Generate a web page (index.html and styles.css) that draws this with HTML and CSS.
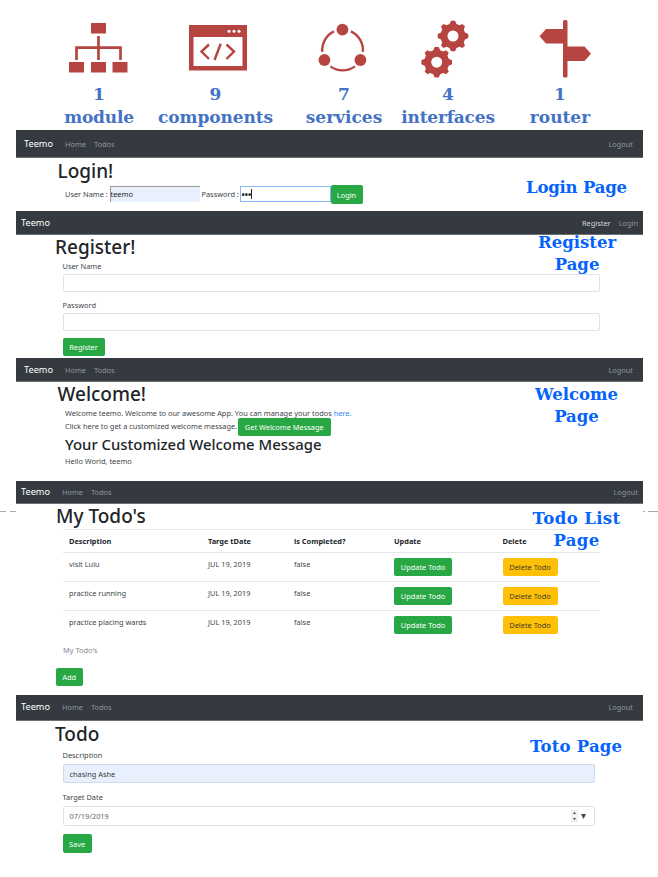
FILE: index.html
```html
<!DOCTYPE html>
<html lang="en">
<head>
<meta charset="utf-8">
<title>Teemo</title>
<link rel="stylesheet" href="styles.css">
</head>
<body>
<header class="summary">
  <div class="stat module">
    <svg width="60" height="66" viewBox="0 0 60 66" fill="#b64541"><path d="M22 12h15v10.500H22zM0 51h15v10.500H0zM22 51h15v10.500H22zM43.500 51h15v10.500h-15z"/><path d="M29.500 25v24M7.500 49V36.700h44V49" fill="none" stroke="#b64541" stroke-width="2.700"/></svg>
    <b>1</b><b class="name">module</b>
  </div>
  <div class="stat components">
    <svg width="60" height="66" viewBox="0 0 60 66"><path fill="#b64541" fill-rule="evenodd" d="M1 14h58v45.500H1zM5.500 26v29h49V26z"/><g fill="#fff"><circle cx="41" cy="20.200" r="1.500"/><circle cx="46" cy="20.200" r="1.500"/><circle cx="51" cy="20.200" r="1.500"/></g><path d="M21 33.500l-7.500 7L21 48M38.500 33.500l7.500 7-7.500 7.500M32.700 32.700L26.500 49" fill="none" stroke="#b64541" stroke-width="2.400"/></svg>
    <b>9</b><b class="name">components</b>
  </div>
  <div class="stat services">
    <svg width="60" height="66" viewBox="0 0 60 66" fill="#b64541"><circle cx="28.400" cy="18.600" r="5.900"/><circle cx="10.400" cy="49" r="5.900"/><circle cx="46.400" cy="49" r="5.900"/><path d="M19.900 20.400A20.800 20.800 0 0 0 8.300 40.800M36.900 20.400A20.800 20.800 0 0 1 48.900 40.800M16.400 55.400A20.800 20.800 0 0 0 40.900 55.400" fill="none" stroke="#b64541" stroke-width="2.400"/></svg>
    <b>7</b><b class="name">services</b>
  </div>
  <div class="stat interfaces">
    <svg width="60" height="66" viewBox="0 0 60 66" fill="#b64541"><defs><path id="gear" fill-rule="evenodd" d="M-2-15.300h4L3.500-12 6.500-10.800 9.400-12 12-9.400 10.800-6.500 12-3.500 15.300-2v4L12 3.500 10.800 6.500 12 9.400 9.400 12 6.500 10.800 3.500 12 2 15.300h-4L-3.500 12-6.500 10.800-9.400 12-12 9.400-10.800 6.500-12 3.500-15.300 2v-4L-12-3.500-10.800-6.500-12-9.400-9.400-12-6.500-10.800-3.500-12zM0-5.500a5.500 5.500 0 1 0 0 11 5.500 5.500 0 0 0 0-11z"/></defs><use href="#gear" x="32" y="25"/><use href="#gear" x="15.700" y="51.200"/></svg>
    <b>4</b><b class="name">interfaces</b>
  </div>
  <div class="stat router">
    <svg width="60" height="66" viewBox="0 0 60 66" fill="#b64541"><rect x="28" y="9" width="4.500" height="57.500" rx="1.500"/><path d="M30 18H11l-6.500 7.200L11 32.500h19zM30 35.500h19.500L56 42.700 49.500 50H30z"/></svg>
    <b>1</b><b class="name">router</b>
  </div>
</header>

<section class="page login">
  <nav><span class="brand">Teemo</span><span>Home</span><span>Todos</span><span class="end">Logout</span></nav>
  <h1>Login!</h1>
  <div class="login-row"><span class="l1">User Name :</span><span class="box filled">teemo</span><span class="l2">Password :</span><span class="box focus"><b>•••</b><i class="caret"></i></span><span class="btn">Login</span></div>
  <div class="tag">Login Page</div>
</section>

<section class="page register">
  <nav><span class="brand">Teemo</span><span class="end on">Register</span><span>Login</span></nav>
  <h1>Register!</h1>
  <div class="form">
    <label>User Name</label><div class="field"></div>
    <label>Password</label><div class="field"></div>
    <span class="btn">Register</span>
  </div>
  <div class="tag">Register<br>Page</div>
</section>

<section class="page welcome">
  <nav><span class="brand">Teemo</span><span>Home</span><span>Todos</span><span class="end">Logout</span></nav>
  <h1>Welcome!</h1>
  <div class="copy">
    <p class="intro">Welcome teemo. Welcome to our awesome App. You can manage your todos <a>here.</a></p>
    <p class="action"><span class="click">Click here to get a customized welcome message.</span><span class="btn">Get Welcome Message</span></p>
    <h2>Your Customized Welcome Message</h2>
    <p class="hello">Hello World, teemo</p>
  </div>
  <div class="tag">Welcome<br>Page</div>
</section>

<section class="page todos">
  <i class="dash left"></i><i class="dash right"></i>
  <nav><span class="brand">Teemo</span><span>Home</span><span>Todos</span><span class="end">Logout</span></nav>
  <h1>My Todo's</h1>
  <div class="table">
    <div class="row head"><span>Description</span><span>Targe tDate</span><span>is Completed?</span><span>Update</span><span>Delete</span></div>
    <div class="row"><span>visit Lulu</span><span>JUL 19, 2019</span><span>false</span><span class="btn">Update Todo</span><span class="btn warn">Delete Todo</span></div>
    <div class="row"><span>practice running</span><span>JUL 19, 2019</span><span>false</span><span class="btn">Update Todo</span><span class="btn warn">Delete Todo</span></div>
    <div class="row"><span>practice placing wards</span><span>JUL 19, 2019</span><span>false</span><span class="btn">Update Todo</span><span class="btn warn">Delete Todo</span></div>
  </div>
  <p class="caption">My Todo's</p>
  <span class="btn add">Add</span>
  <div class="tag">Todo List<br>Page</div>
</section>

<section class="page todo">
  <nav><span class="brand">Teemo</span><span>Home</span><span>Todos</span><span class="end">Logout</span></nav>
  <h1>Todo</h1>
  <div class="form">
    <label>Description</label><div class="field filled">chasing Ashe</div>
    <label>Target Date</label><div class="field date"><span>07/19/2019</span><svg width="16" height="12" viewBox="0 0 16 12"><path d="M0 0h7v12H0z" fill="#efefef"/><path d="M2 4l1.500-2L5 4zM2 8l1.500 2L5 8zM10 4h5l-2.500 5z" fill="#444"/></svg></div>
    <span class="btn">Save</span>
  </div>
  <div class="tag">Toto Page</div>
</section>
</body>
</html>
```
FILE: styles.css
```css
* { box-sizing: border-box; }
body { margin: 0; width: 658px; height: 877px; overflow: hidden; background: #fff; color: #40454a; font: 7.4px/12px "Noto Sans", "Open Sans", sans-serif; white-space: nowrap; }
h1, h2, p { margin: 0; }
i { font-style: normal; }
a { color: #2b8cf5; }

.summary { height: 130px; padding: 11px 0 0 39px; display: flex; }
.stat { width: 120px; display: flex; flex-direction: column; align-items: center; color: #4472c4; font: bold 17px/23px "DejaVu Serif", serif; }
.stat svg { display: block; margin-bottom: 6px; overflow: visible; }
.components { width: 113px; }
.components svg { margin-left: 5px; }
.services { width: 144px; }
.interfaces { width: 64px; }
.interfaces svg { margin-left: 5px; }
.router { width: 160px; }
.router svg { margin-left: 10px; }
.module .name { letter-spacing: -0.2px; }
.components .name { letter-spacing: -0.1px; }
.interfaces .name { letter-spacing: -0.2px; }

.page { position: relative; margin-left: 16px; width: 627px; }
nav { display: flex; align-items: center; height: 24px; background: #343a40; border-bottom: 1px solid #6b7075; padding: 0 10px 0 8px; gap: 8px; color: #92969a; }
.brand { color: #fff; font-size: 9.2px; margin-right: 4px; }
.end { margin-left: auto; }
.on { color: #d0d2d4; }
h1 { font-size: 19px; line-height: 24px; font-weight: 500; color: #212529; margin-left: 40px; }
h2 { font-size: 14.900px; line-height: 17px; font-weight: 500; color: #212529; }
.btn { display: inline-flex; align-items: center; justify-content: center; height: 17.500px; background: #28a745; color: #fff; border-radius: 2px; }
.warn { background: #ffc107; color: #40392a; }
.tag { position: absolute; text-align: center; color: #0563fa; font: bold 16.500px/22px "DejaVu Serif", serif; }
.form { padding-left: 46.500px; }
.form label { display: block; }
.field { border: 1px solid #dfe2e6; border-radius: 2px; width: 537.500px; height: 18px; }

.login { height: 81px; }
.login nav { height: 28px; }
.login h1 { margin-left: 41.500px; line-height: 27px; }
.login-row { display: flex; margin-left: 49px; }
.login-row > span { line-height: 18px; }
.l1 { width: 44.500px; }
.l2 { width: 38px; }
.box { width: 91px; height: 16px; margin-top: 1px; padding-left: 1px; color: #222; }
.login-row .box { line-height: 15px; }
.login-row .filled { background: #e8f0fe; border-top: 1px solid #999; border-left: 1px solid #999; padding-left: 0; margin-right: 2px; width: 90px; }
.focus { border: 1px solid #8ab8f5; display: flex; }
.focus b { font-size: 8.500px; }
.caret { width: 1px; height: 10px; margin-top: 2px; background: #222; }
.login .btn { width: 32px; height: 19px; }
.login .tag { left: 510px; top: 47px; letter-spacing: -0.200px; }

.register { height: 147px; }
.register nav, .todos nav, .todo nav { padding-left: 5px; }
.register nav { padding-right: 5px; }
.register h1 { margin-left: 39px; }
.register label { height: 15px; line-height: 14px; }
.register .field { margin-bottom: 8px; height: 17.500px; }
.register .form label:nth-of-type(2) { margin-top: -1.500px; }
.register .btn { width: 42px; margin-top: -0.500px; }
.register .tag { left: 522px; top: 21px; }

.welcome { height: 123px; }
.welcome h1 { margin-left: 41.500px; line-height: 25px; }
.copy { padding-left: 49px; }
.action { display: flex; justify-content: space-between; width: 265.500px; height: 17px; }
.click { line-height: 14px; letter-spacing: 0.010px; }
.intro { letter-spacing: 0; }
.action .btn { width: 92.500px; height: 17.500px; margin-top: -1px; }
.hello { margin-top: 2px; }
.welcome .tag { left: 519px; top: 26px; }

.todos { height: 214px; }
.todos nav { height: 23px; padding-right: 5px; }
.todos h1 { height: 25px; }
.table { margin-left: 47px; width: 537px; }
.row { display: grid; grid-template-columns: 139px 86px 100px 108.500px 55px; padding: 5px 0 0 6px; height: 29px; border-top: 1px solid #e4e7ea; }
.row > span:not(.btn) { margin-top: -0.500px; }
.row .btn { width: 58px; }
.row .warn { width: 55px; }
.head { height: 23px; font-weight: bold; color: #212529; }
.caption { margin: 5px 0 12px 47px; color: #868c92; }
.add { width: 27.500px; margin-left: 39.500px; }
.todos .tag { left: 516.500px; top: 27px; letter-spacing: 0.400px; }
.dash { position: absolute; top: 30px; height: 1px; width: 16px; left: -16px; background: linear-gradient(90deg, #aaa 6px, transparent 6px 10px, #aaa 10px); }
.dash.right { left: 627px; background: linear-gradient(90deg, #aaa 2px, transparent 2px 5px, #aaa 5px); }

.todo { height: 182px; }
.todo nav { height: 25.500px; }
.todo h1 { margin-left: 39px; line-height: 26.500px; }
.todo label { height: 17px; line-height: 16px; }
.todo .field { width: 532.500px; height: 19px; padding: 0 6px; line-height: 18px; margin-bottom: 6px; color: #343a40; }
.todo .field.filled { background: #e8f0fe; border-color: #cfdcee; }
.todo .date { display: flex; justify-content: space-between; align-items: center; height: 20px; margin-bottom: 8px; color: #666; }
.todo .date svg { margin-right: 1px; }
.todo .btn { width: 29px; height: 19px; }
.todo .tag { left: 514px; top: 41px; letter-spacing: 0.200px; }
```
